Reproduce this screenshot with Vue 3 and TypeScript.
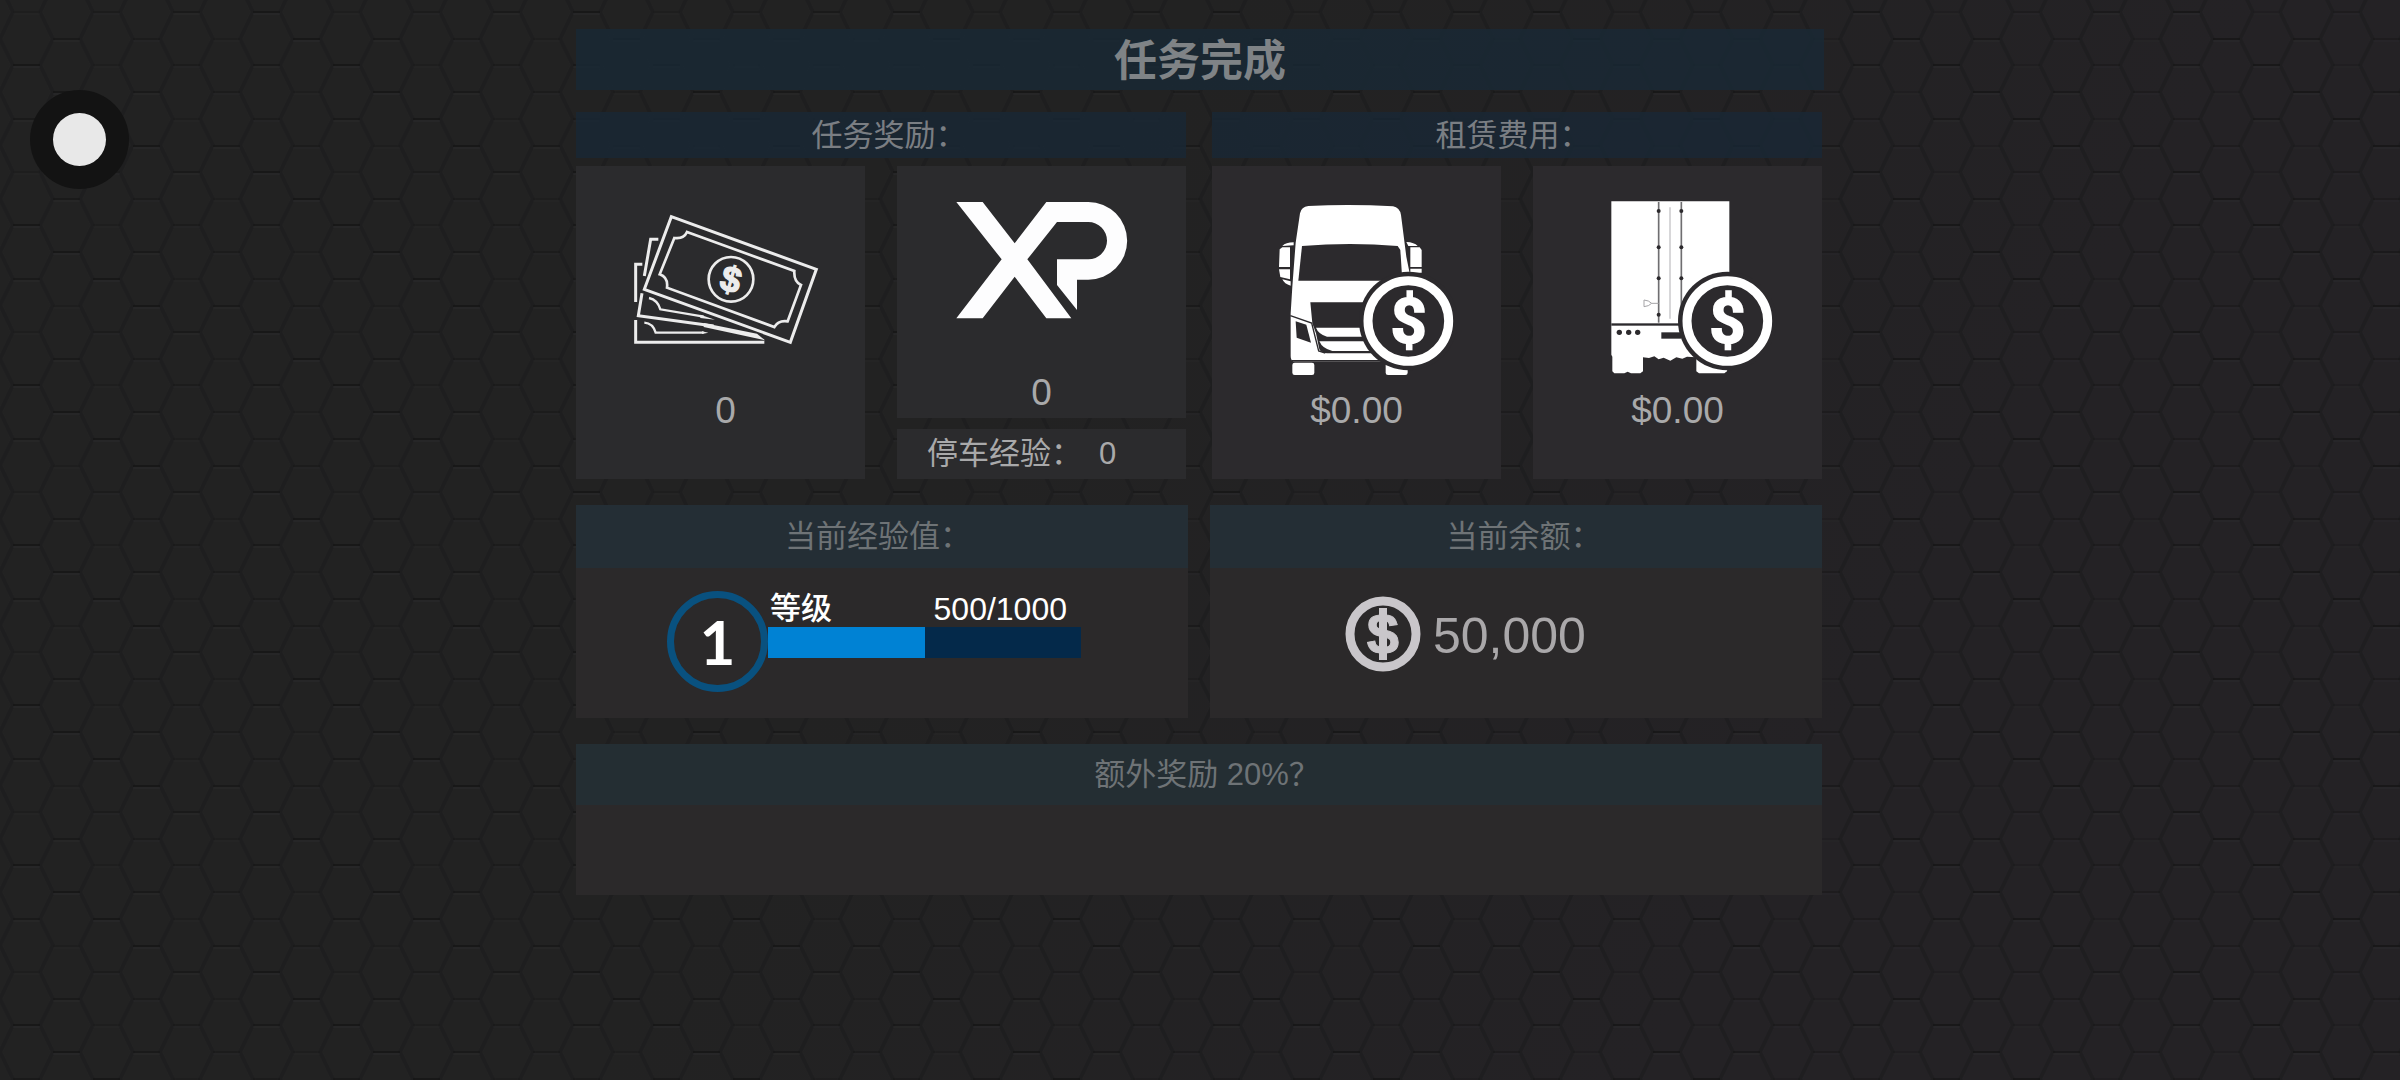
<script setup lang="ts">
import { computed, ref } from 'vue'

const level = ref(1)
const xp = ref(500)
const xpGoal = ref(1000)
const balance = ref(50000)

const xpPercent = computed(() => (xp.value / xpGoal.value) * 100)
const balanceText = computed(() => balance.value.toLocaleString('en-US'))
const money = (value: number): string => `$${value.toFixed(2)}`

interface Edge {
  d: string
  opacity: number
}

// Flat edges of the honeycomb, four column pairs wide and three rows high.
const edges: Edge[] = []
for (let pair = 0; pair < 4; pair++) {
  const x = pair * 80
  ;[0, 53, 107].forEach((y, row) => {
    const upper = 0.25 + ((pair * 5 + row * 3) % 4) * 0.15
    const lower = 0.25 + ((pair * 3 + row * 5 + 2) % 4) * 0.15
    edges.push({ d: `M${x + 13} ${y + 14}h27`, opacity: upper })
    edges.push({ d: `M${x + 53} ${y + 41}h27`, opacity: lower })
  })
}

// Slanted edges between the columns.
const slants: string[] = []
for (let x = 0; x <= 320; x += 80) {
  slants.push(`M${x + 40} 14L${x + 53} 41L${x + 40} 67L${x + 53} 94L${x + 40} 121L${x + 53} 147L${x + 40} 174`)
  slants.push(`M${x + 13} 14L${x} 41L${x + 13} 67L${x} 94L${x + 13} 121L${x} 147L${x + 13} 174`)
  slants.push(`M${x + 53} -13L${x + 40} 14M${x} -13L${x + 13} 14`)
}
const slantPath = slants.join('')
</script>

<template>
  <div class="screen">
    <svg class="honeycomb" aria-hidden="true">
      <defs>
        <pattern id="hex" width="320" height="160" patternUnits="userSpaceOnUse" patternTransform="translate(0 -2)">
          <path :d="slantPath" fill="none" stroke="#1a1a1b" stroke-width="4" stroke-opacity="0.5" />
          <g v-for="edge in edges" :key="edge.d" fill="none" :opacity="edge.opacity">
            <path :d="edge.d" stroke="#131314" stroke-width="2" />
            <path :d="edge.d" stroke="#2c2c2d" stroke-width="1" transform="translate(0 2)" />
          </g>
        </pattern>
      </defs>
      <rect width="100%" height="100%" fill="url(#hex)" />
    </svg>

    <button class="assist" type="button" aria-label="Menu"><span class="assist-dot"></span></button>

    <main class="summary">
      <h1 class="title">任务完成</h1>

      <div class="sections">
        <div class="pair rewards">
          <section class="group">
            <h2 class="strip nudge-right">任务奖励：</h2>
            <div class="cards">
              <article class="card">
                <svg class="icon" width="200" height="220" viewBox="152 18 600 660" aria-hidden="true">
                  <g fill="none" stroke="#ececec" stroke-width="9">
                    <path d="M303 170L738 328L660 547L222 388Z" />
                    <path stroke-width="8" d="M350 216L672 333Q670 364 692 375L652 484Q624 480 612 501L290 383Q294 352 268 343L312 234Q340 238 350 216Z" />
                    <circle cx="482" cy="358" r="67" stroke-width="8" />
                    <path d="M264 238H241L222 348M215 400L204 467L430 498" />
                    <path d="M216 313H196V426M196 480V547H582" />
                    <path stroke-width="7" d="M236 414Q262 420 270 448L400 470M222 488Q248 490 256 518H400" />
                  </g>
                  <g fill="#ececec">
                    <path d="M400 489L560 521L584 541L400 501Z" />
                    <path d="M390 464L434 479L390 474Z" />
                    <path d="M395 514L414 518L395 522Z" />
                    <text x="482" y="395" font-size="108" text-anchor="middle" stroke="#ececec" stroke-width="4" transform="rotate(16 482 358)">$</text>
                  </g>
                </svg>
                <p class="amount nudge-right">0</p>
              </article>
              <div class="stack">
                <article class="card grow">
                  <svg class="icon" width="200" height="202" viewBox="185 18 600 606" role="img" aria-label="XP">
                    <path fill="#fdfdfe" d="M228 126H307L403 250L498 126H624A116 116 0 0 1 624 359H590V450L530 375V298H624A56 56 0 0 0 624 186H530L441 298L573 475H498L403 350L307 475H228L364 298Z" />
                  </svg>
                  <p class="amount">0</p>
                </article>
                <div class="card parking"><span>停车经验：</span><span>0</span></div>
              </div>
            </div>
          </section>

          <section class="group">
            <h2 class="strip nudge-left">租赁费用：</h2>
            <div class="cards">
              <article class="card">
                <svg class="icon" width="200" height="220" viewBox="170 18 600 660" aria-hidden="true">
                  <g fill="#fff">
                    <path d="M324 138Q450 131 578 139Q598 142 602 165L618 290L628 340V604H278Q271 600 271 588V460L276 380L286 248L299 160Q303 140 324 138Z" />
                    <rect x="276" y="608" width="66" height="37" rx="7" />
                    <rect x="556" y="608" width="66" height="37" rx="7" />
                    <path d="M238 268L246 262H269V321H236ZM236 328H269V358L240 351ZM246 358L271 364V377Q252 372 246 358ZM246 258Q256 247 280 247V256Z" />
                    <path d="M630 262H658L664 270V321H630ZM630 326H664V338H630ZM618 246Q642 247 652 258H624Z" />
                  </g>
                  <g fill="#2c2a2d">
                    <path d="M305 258Q450 246 592 258L600 270L606 362H294Z" />
                    <path d="M330 427H560V580H380Q362 577 357 568L347 520L336 490Z" />
                    <path d="M286 484L318 494L332 548L289 533Z" />
                  </g>
                  <path d="M270 467L334 489L355 573L375 579M274 602H560" fill="none" stroke="#2c2a2d" stroke-width="4" />
                  <g fill="#fff">
                    <path d="M347 503H560V530H380Q354 522 347 503Z" />
                    <path d="M357 544H560V573H396Q366 566 357 544Z" />
                  </g>
                  <circle cx="624" cy="483" r="148" fill="#2c2a2d" />
                  <circle cx="624" cy="483" r="121" fill="none" stroke="#fff" stroke-width="27" />
                  <text class="coin-sign" x="625" y="549" font-size="190" text-anchor="middle">$</text>
                </svg>
                <p class="amount">{{ money(0) }}</p>
              </article>
              <article class="card">
                <svg class="icon" width="200" height="220" viewBox="173 18 600 660" aria-hidden="true">
                  <path fill="#fff" d="M273 124H627V590L620 634L612 640H536L528 634V592L500 590L486 596L468 592L450 602L430 593L415 598L402 589L386 594L368 592V634L360 640H332L322 635L312 640H282L276 634V590L273 584Z" />
                  <g fill="none" stroke="#6f6e71" stroke-width="5">
                    <path d="M415 126V488" />
                    <path d="M483 126V440" />
                    <path d="M449 142V476" stroke="#c4c3c6" stroke-width="4" />
                    <path d="M415 430H394L384 437L371 440V420L384 423L394 430" stroke="#a5a4a7" stroke-width="3" />
                  </g>
                  <g fill="#2c2a2d">
                    <circle v-for="y in [153, 262, 355, 464]" :key="y" cx="415" :cy="y" r="6" />
                    <circle v-for="y in [153, 262, 355]" :key="y" cx="483" :cy="y" r="6" />
                    <rect x="273" y="490" width="210" height="7" />
                    <circle v-for="x in [297, 325, 352]" :key="x" :cx="x" cy="517" r="8" />
                    <rect x="423" y="517" width="60" height="19" />
                    <circle cx="621" cy="483" r="148" />
                  </g>
                  <circle cx="621" cy="483" r="121" fill="none" stroke="#fff" stroke-width="27" />
                  <text class="coin-sign" x="621" y="549" font-size="190" text-anchor="middle">$</text>
                </svg>
                <p class="amount">{{ money(0) }}</p>
              </article>
            </div>
          </section>
        </div>

        <div class="pair status">
          <section class="panel">
            <h2 class="panel-head nudge-left">当前经验值：</h2>
            <div class="panel-body experience">
              <div class="level">{{ level }}</div>
              <div class="progress">
                <div class="progress-label">
                  <span>等级</span><span class="points">{{ xp }}/{{ xpGoal }}</span>
                </div>
                <div class="track" role="progressbar" aria-label="等级" aria-valuemin="0" :aria-valuenow="xp" :aria-valuemax="xpGoal">
                  <div class="fill" :style="{ width: xpPercent + '%' }"></div>
                </div>
              </div>
            </div>
          </section>

          <section class="panel">
            <h2 class="panel-head nudge-right">当前余额：</h2>
            <div class="panel-body balance">
              <svg class="icon" width="76" height="76" viewBox="0 0 76 76" aria-hidden="true">
                <circle cx="38" cy="38" r="33" fill="none" stroke="#c9c6ca" stroke-width="9" />
                <path d="M38 12V64" stroke="#c9c6ca" stroke-width="8" />
                <text x="38" y="58" font-size="58" text-anchor="middle" fill="#c9c6ca" stroke="#c9c6ca">$</text>
              </svg>
              <span class="balance-value">{{ balanceText }}</span>
            </div>
          </section>
        </div>

        <section class="panel">
          <h2 class="panel-head bonus-head nudge-right">额外奖励 20%？</h2>
          <div class="bonus-body"></div>
        </section>
      </div>
    </main>
  </div>
</template>

<style>
body {
  margin: 0;
  background: #222222;
}
</style>

<style scoped>
.screen {
  position: relative;
  box-sizing: border-box;
  min-height: 100vh;
  padding: 29px 0;
  background: linear-gradient(120deg, #222222 0%, #222222 40%, #242225 75%);
  font-family: "Liberation Sans", "Noto Sans CJK SC", sans-serif;
}

.honeycomb {
  position: absolute;
  inset: 0;
  width: 100%;
  height: 100%;
}

.assist {
  position: absolute;
  top: 90px;
  left: 30px;
  display: flex;
  align-items: center;
  justify-content: center;
  width: 99px;
  height: 99px;
  padding: 0;
  border: 0;
  border-radius: 50%;
  background: #131313;
}

.assist-dot {
  width: 53px;
  height: 53px;
  border-radius: 50%;
  background: #e8e8e8;
}

.summary {
  position: relative;
  width: 52%;
  margin: 0 auto;
}

.title,
.strip,
.panel-head,
.amount {
  margin: 0;
  text-align: center;
}

.title {
  margin-bottom: 22px;
  padding-top: 3px;
  background: rgba(25, 41, 54, 0.8);
  color: #7f8386;
  font-size: 43px;
  font-weight: 700;
  line-height: 58px;
}

.sections {
  display: flex;
  flex-direction: column;
  gap: 26px;
  margin-right: 2px;
}

.pair {
  display: grid;
  grid-template-columns: 1fr 1fr;
}

.rewards {
  gap: 26px;
}

.status {
  gap: 22px;
}

.group {
  display: flex;
  flex-direction: column;
  gap: 8px;
}

.strip {
  padding-top: 2px;
  background: rgba(25, 40, 54, 0.8);
  color: #7a7e83;
  font-size: 31px;
  font-weight: 400;
  line-height: 44px;
}

.nudge-right {
  padding-left: 16px;
}

.nudge-left {
  padding-right: 8px;
}

.cards {
  display: grid;
  grid-template-columns: 1fr 1fr;
  gap: 32px;
  min-height: 313px;
}

.stack {
  display: flex;
  flex-direction: column;
  gap: 11px;
}

.card {
  background: #2b2b2d;
}

.group + .group .card {
  background: #2c2a2d;
}

.grow {
  flex: 1;
}

.icon {
  display: block;
  flex: none;
  margin: 0 auto;
  font-family: "Liberation Sans", sans-serif;
  font-weight: 700;
}

.coin-sign {
  fill: #ffffff;
  stroke: #ffffff;
  stroke-width: 5px;
  font-family: Roboto, sans-serif;
}

.amount {
  color: #a9a9aa;
  font-size: 37px;
  line-height: 50px;
}

.amount.nudge-right {
  padding-left: 10px;
}

.parking {
  display: flex;
  gap: 17px;
  padding-left: 30px;
  color: #a9a9aa;
  font-size: 31px;
  line-height: 50px;
}

.panel {
  background: #2b292a;
}

.panel-head {
  background: #242e35;
  color: #6e7376;
  font-size: 31px;
  font-weight: 400;
  line-height: 63px;
}

.panel-body {
  display: flex;
  box-sizing: border-box;
  height: 150px;
}

.experience {
  padding: 23px 91px;
}

.level {
  box-sizing: border-box;
  flex: none;
  width: 101px;
  height: 101px;
  border: 7px solid #09517f;
  border-radius: 50%;
  color: #ffffff;
  font-family: Lato, sans-serif;
  font-size: 62px;
  font-weight: 700;
  line-height: 87px;
  text-align: center;
}

.progress {
  flex: 0 1 313px;
}

.progress-label {
  display: flex;
  justify-content: space-between;
  padding: 0 14px 0 2px;
  color: #ffffff;
  font-size: 31px;
  font-weight: 500;
  line-height: 36px;
}

.points {
  font-size: 32px;
}

.track {
  height: 31px;
  background: #04294a;
}

.fill {
  height: 100%;
  background: #0082d4;
}

.balance {
  gap: 12px;
  padding: 28px 135px;
}

.balance .icon {
  margin: 0;
}

.balance-value {
  color: #aaa8aa;
  font-size: 50px;
  line-height: 80px;
}

.bonus-head {
  background: #242e33;
  line-height: 61px;
}

.bonus-body {
  height: 90px;
}
</style>
